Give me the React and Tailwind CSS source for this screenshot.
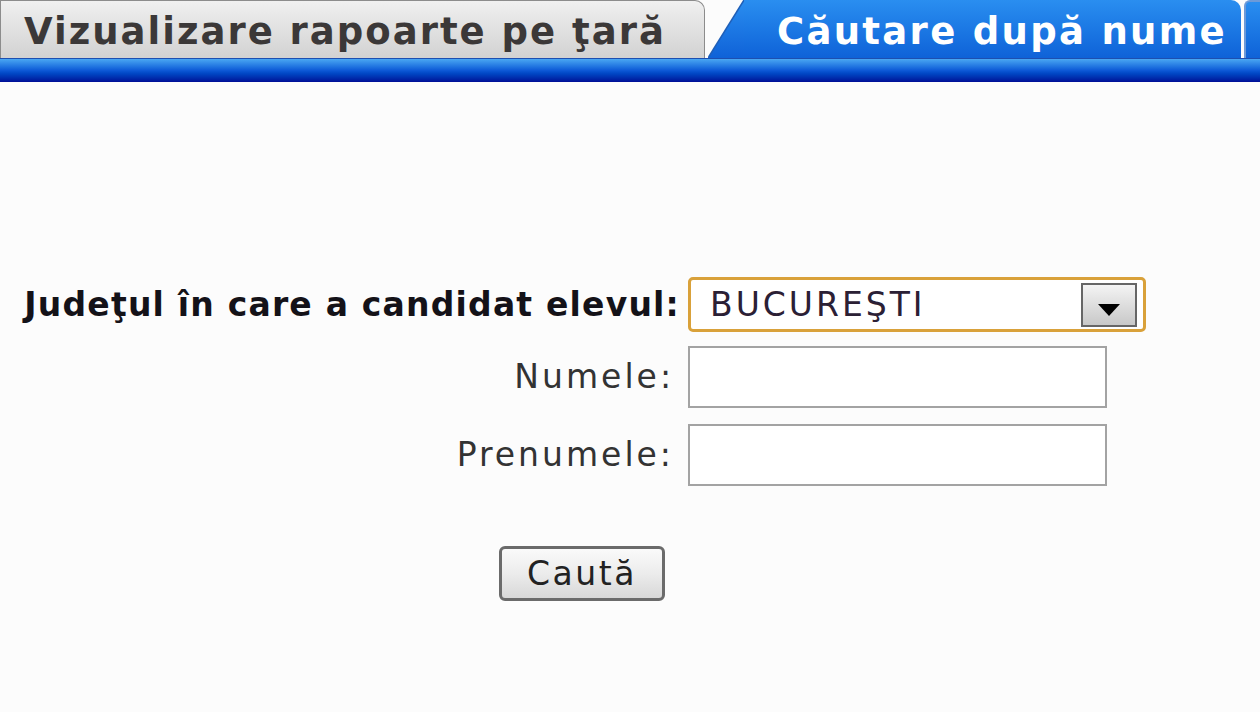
import { useState } from "react"

function App() {
  const [judet, setJudet] = useState("BUCUREŞTI")
  const [nume, setNume] = useState("")
  const [prenume, setPrenume] = useState("")

  return (
    <div className="w-[1260px] h-[712px] overflow-hidden bg-[#fcfcfc] font-['DejaVu_Sans',sans-serif]">

      {/* tabs */}
      <div className="relative">
        <div className="flex items-end h-[58px]">
          <div className="w-[705px] h-[58px] rounded-tr-[10px] border border-b-0 border-[#8c8c8c] bg-gradient-to-b from-[#f0f0f0] to-[#d2d2d2] flex items-center pl-[23px] pt-[4px]">
            <span className="text-[37px] font-bold text-[#3b3838] tracking-[2px] leading-none">Vizualizare rapoarte pe ţară</span>
          </div>
          <div className="flex items-end h-[58px] ml-[3px]">
            <svg width="36" height="58" viewBox="0 0 36 58" className="block">
              <defs>
                <linearGradient id="tabg" x1="0" y1="0" x2="0" y2="1">
                  <stop offset="0" stopColor="#2a8ef0" />
                  <stop offset="1" stopColor="#0f62d8" />
                </linearGradient>
              </defs>
              <polygon points="36,0 36,58 0,58" fill="url(#tabg)" />
              <line x1="36" y1="0" x2="0" y2="58" stroke="#1f5fb8" strokeWidth="1.5" />
            </svg>
            <div className="w-[497px] h-[58px] rounded-tr-[10px] bg-gradient-to-b from-[#2a8ef0] to-[#0f62d8] flex items-center pt-[4px]">
              <span className="text-[37px] font-bold text-white ml-[33px] tracking-[2.3px] leading-none">Căutare după nume</span>
            </div>
          </div>
          <div className="w-[3px]" />
          <div className="flex-1 h-[58px] rounded-tl-[6px] border-l-2 border-t-2 border-[#6d9ad8] bg-gradient-to-b from-[#2a8ef0] to-[#0f62d8]" />
        </div>
        <div className="h-[24px] bg-gradient-to-b from-[#4aa6f2] via-[#0d58d6] to-[#000b96] border-t border-[#1d4fb0]" />
      </div>

      {/* form */}
      <div className="pt-[195px]">
        <div className="grid grid-cols-[688px_auto] items-center gap-y-[14px]">
          <label className="text-right pr-[8px] text-[33px] font-bold text-[#141218] tracking-[1.2px]">Judeţul în care a candidat elevul:</label>
          <div className="w-[458px] h-[55px] rounded-[5px] border-[3px] border-[#d9a13a] bg-white flex items-center pr-[6px]">
            <span className="flex-1 pl-[19px] text-[33px] text-[#2b2035] tracking-[3px] leading-none">{judet}</span>
            <button
              onClick={() => setJudet(judet)}
              className="w-[56px] h-[44px] border-2 border-[#666] bg-gradient-to-b from-[#f4f4f4] to-[#c8c8c8] flex items-end justify-center pb-[9px]"
            >
              <svg width="22" height="12" viewBox="0 0 22 12">
                <polygon points="0,0 22,0 11,12" fill="#000" />
              </svg>
            </button>
          </div>

          <label className="text-right pr-[14px] text-[33px] text-[#333] tracking-[3px]">Numele:</label>
          <input
            value={nume}
            onChange={(e) => setNume(e.target.value)}
            className="w-[419px] h-[62px] border-2 border-[#a3a3a3] bg-white outline-none px-2 text-[30px]"
          />

          <label className="text-right pr-[14px] text-[33px] text-[#333] tracking-[3px] mt-[2px]">Prenumele:</label>
          <input
            value={prenume}
            onChange={(e) => setPrenume(e.target.value)}
            className="w-[419px] h-[62px] border-2 border-[#a3a3a3] bg-white outline-none px-2 text-[30px] mt-[2px]"
          />
        </div>

        <div className="pl-[499px] mt-[60px]">
          <button className="w-[166px] h-[55px] rounded-[6px] border-[3px] border-[#6b6b6b] bg-gradient-to-b from-[#fafafa] via-[#ececec] to-[#d8d8d8] text-[33px] leading-none tracking-[2.5px] text-[#222]">
            Caută
          </button>
        </div>
      </div>

    </div>
  )
}

export default App
